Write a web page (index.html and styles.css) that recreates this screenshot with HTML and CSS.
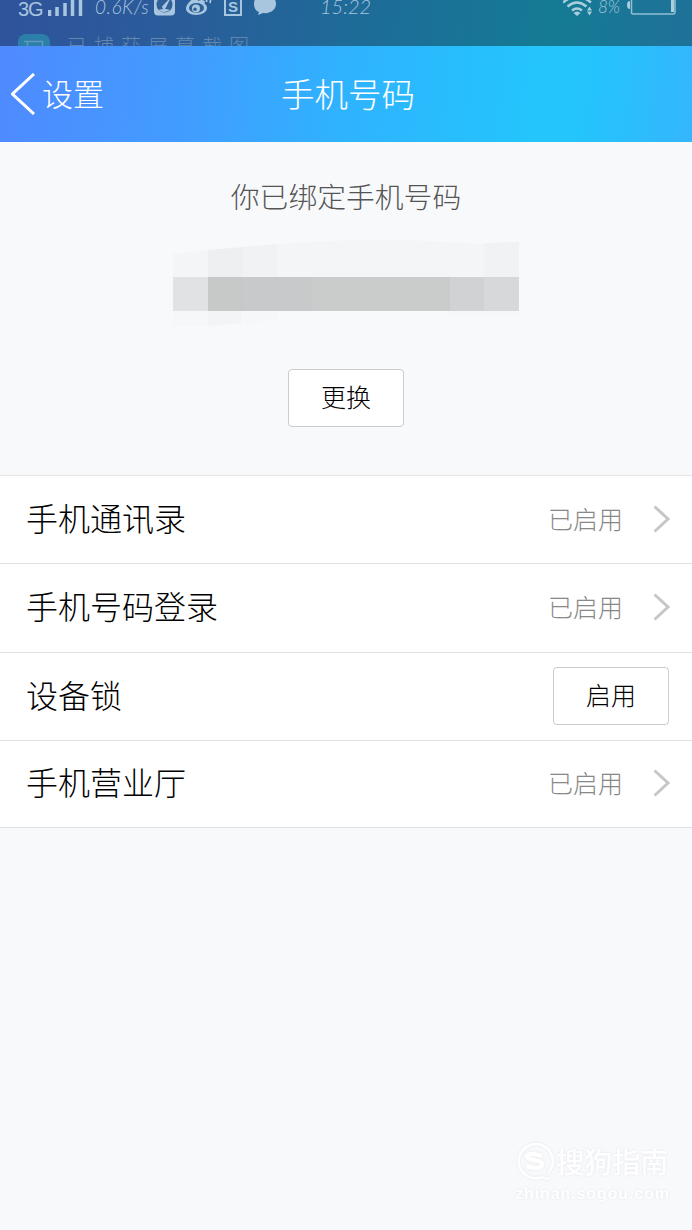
FILE: index.html
```html
<!DOCTYPE html>
<html lang="zh-CN">
<head>
  <meta charset="UTF-8">
  <title>手机号码</title>
  <link rel="stylesheet" href="styles.css">
</head>
<body>
<div class="status">
  <div class="status_bar">
    <span class="net">3G</span>
    <svg class="signal" width="35" height="18" viewBox="0 0 35 18">
      <path d="M1.500 18v-6M9 18v-9M17 18V5M24.500 18V2M32.500 18V0" stroke="#a9c6df" stroke-width="3.500"/>
    </svg>
    <span class="speed">0.6K/s</span>
    <svg class="ico_clock" width="21" height="20" viewBox="0 0 21 20">
      <rect y="-4" width="21" height="23.500" rx="4" fill="#a9c6df"/>
      <circle cx="10.500" cy="8.500" r="8" fill="#315f98"/>
      <path d="M4 14q6 4 12 0-5-2-12 0z" fill="#a9c6df"/>
      <path d="M8 10.500L17 1l-5.500 11.500q-3 2-3.500-2z" fill="#a9c6df"/>
    </svg>
    <svg class="ico_weibo" width="28" height="20" viewBox="0 0 28 20">
      <path d="M21 12c0 4-5 7-11 7S0 16 0 12.500C0 9 5 3 9 2.500c3 0 3 1 3 2.500 4-2 8-1 6.500 3 1.500.5 2.500 2 2.500 4z" fill="#a9c6df"/>
      <ellipse cx="10.500" cy="12" rx="7.500" ry="5" fill="#2c6199"/>
      <circle cx="10" cy="12.500" r="4" fill="#a9c6df"/>
      <circle cx="9" cy="13.200" r="1.700" fill="#2c6199"/>
      <path d="M18 2q3 0 2.500 4M20-2q6 3 4 9" fill="none" stroke="#a9c6df" stroke-width="1.800"/>
    </svg>
    <span class="ico_s">S</span>
    <svg class="ico_chat" width="22" height="20" viewBox="0 0 22 20">
      <path d="M11-3C4-3 0 2 0 8c0 4 2 7 5 8l-1 3 5-2c8 1 13-4 13-9S18-3 11-3z" fill="#a9c6df"/>
    </svg>
    <span class="time">15:22</span>
    <svg class="wifi" width="30" height="17" viewBox="0 0 30 17">
      <path d="M0 2.500Q14-9 28 2.500M4.500 6.500q9.500-8 19 0M9 10.500q5-4 10 0" fill="none" stroke="#a9cfdd" stroke-width="2.400"/>
      <path d="M10.500 13q3.500-3 7 0L14 16zM24 10.500l2.500-4 2.500 4zM24 11.500h5l-2.500 4z" fill="#a9cfdd"/>
    </svg>
    <span class="percent">8%</span>
    <svg class="battery" width="50" height="20" viewBox="0 0 50 20">
      <path d="M4.500-5v21.500q0 1.500 2 1.500h39.500q2 0 2-2V-5" fill="none" stroke="#8fc0d4" stroke-width="1.500"/>
      <path d="M3 5Q0 5 0 9t3 4z" fill="#a9cfdd"/>
      <path d="M45.500 0v16" stroke="#a9cfdd" stroke-width="3"/>
    </svg>
  </div>
  <div class="notice">
    <svg class="notice_ico" width="32" height="32" viewBox="0 0 32 32">
      <rect width="32" height="32" rx="8" fill="#2b7fa8"/>
      <path d="M6 7.500h18.500V24M9.500 7v15h14" fill="none" stroke="#6199be" stroke-width="1.500"/>
    </svg>
    <span class="notice_text">已捕获屏幕截图</span>
  </div>
</div>
<div class="header">
  <div class="back">
    <svg width="24" height="42" viewBox="0 0 24 42">
      <path d="M23 1L1.500 21 23 41" fill="none" stroke="#fff" stroke-width="3"/>
    </svg>
    <span>设置</span>
  </div>
  <div class="title">手机号码</div>
</div>
<div class="bind">
  <p class="tip">你已绑定手机号码</p>
  <!-- 号码打码 -->
  <svg class="mosaic" width="346" height="88" viewBox="0 0 346 88">
    <path d="M0 14l35-4v27H0z" fill="#f4f5f7"/>
    <path d="M35 10l35-3v30H35z" fill="#eeeff0"/>
    <path d="M70 7l34-3v33H70z" fill="#f1f2f3"/>
    <path d="M104 4Q200-3 276 2l35 2v33H104z" fill="#f4f5f7"/>
    <path d="M311 3l35-1v35h-35z" fill="#f1f2f4"/>
    <path d="M0 37h35v34H0z" fill="#e1e2e4"/>
    <path d="M35 37h35v34H35z" fill="#c7c9c8"/>
    <path d="M70 37h69v34H70z" fill="#c8c9cb"/>
    <path d="M139 37h138v34H139z" fill="#cacccb"/>
    <path d="M277 37h34v34h-34z" fill="#d1d2d4"/>
    <path d="M311 37h35v34h-35z" fill="#d7d8da"/>
    <path d="M0 71h35v15H0z" fill="#f6f7f9"/>
    <path d="M35 71h34v12l-34 3z" fill="#f3f4f5"/>
    <path d="M70 71h34v9l-34 3zM277 71h69v5h-69z" fill="#f6f7f9"/>
  </svg>
  <div class="btn">更换</div>
</div>
<div class="list">
  <div class="row">
    <span class="name">手机通讯录</span>
    <span class="state">已启用</span>
    <svg class="arrow" width="17" height="28" viewBox="0 0 17 28"><path d="M1.500 1.500L15 14 1.500 26.500"/></svg>
  </div>
  <div class="row">
    <span class="name">手机号码登录</span>
    <span class="state">已启用</span>
    <svg class="arrow" width="17" height="28" viewBox="0 0 17 28"><path d="M1.500 1.500L15 14 1.500 26.500"/></svg>
  </div>
  <div class="row">
    <span class="name">设备锁</span>
    <div class="btn">启用</div>
  </div>
  <div class="row">
    <span class="name">手机营业厅</span>
    <span class="state">已启用</span>
    <svg class="arrow" width="17" height="28" viewBox="0 0 17 28"><path d="M1.500 1.500L15 14 1.500 26.500"/></svg>
  </div>
</div>
<div class="watermark">
  <div class="brand">
    <svg width="40" height="40" viewBox="0 0 40 40">
      <path d="M33 31a17 17 0 1 0-6 4M27 35q4 3 8 1" fill="none" stroke="#fff" stroke-width="2.500"/>
      <path d="M27 14q-14-4-15 0c0 5 15 3 15 8 0 6-10 4-16 2" fill="none" stroke="#fff" stroke-width="4.500"/>
    </svg>
    <span>搜狗指南</span>
  </div>
  <div class="site">zhinan.sogou.com</div>
</div>
</body>
</html>
```
FILE: styles.css
```css
* {
  margin: 0;
  padding: 0;
  box-sizing: border-box;
}
body {
  display: flex;
  flex-direction: column;
  height: 1230px;
  background: #f8f9fb;
  font-family: "Noto Sans CJK SC", sans-serif;
  font-weight: 300;
  overflow: hidden;
}
svg {
  display: block;
  flex: none;
}
.status {
  height: 46px;
  flex: none;
  overflow: hidden;
  background: linear-gradient(96deg, #30539b 0%, #2a5c9a 25%, #1b6f98 58%, #157b94 80%, #1f7199 100%);
  color: #a9c6df;
}
.status_bar {
  display: flex;
  height: 20px;
  margin-bottom: 14px;
  white-space: nowrap;
}
.net {
  width: 30px;
  margin-left: 18px;
  font: 20px/18px "Liberation Sans", sans-serif;
  letter-spacing: -1px;
}
.signal {
  margin-top: -2px;
}
.speed {
  width: 59px;
  margin-left: 12px;
  font: italic 300 19px/13px Lato, sans-serif;
  letter-spacing: 0.5px;
}
.ico_clock {
  margin: -4px 10px 0 0;
}
.ico_weibo {
  margin: -4px 10px 0 1px;
}
.ico_s {
  width: 18px;
  height: 20px;
  margin-top: -4px;
  border: 2px solid #a9c6df;
  font: bold 15px/18px "Liberation Sans", sans-serif;
  text-align: center;
}
.ico_chat {
  margin: -4px 0 0 12px;
}
.time {
  width: 52px;
  margin-left: 44px;
  font: italic 300 20px/13px Lato, sans-serif;
}
.wifi {
  margin-left: 191px;
}
.percent {
  margin-left: 5px;
  width: 29px;
  font: italic 300 17px/13px Lato, sans-serif;
}
.battery {
  margin-top: -4px;
}
.notice {
  display: flex;
  height: 32px;
  color: #6487b0;
}
.notice_ico {
  margin-left: 18px;
}
.notice_text {
  margin: -1px 0 0 17px;
  font-size: 20px;
  line-height: 26px;
  letter-spacing: 7px;
}
.header {
  display: grid;
  grid-template-columns: 1fr auto 1fr;
  align-items: center;
  height: 96px;
  flex: none;
  background: linear-gradient(96deg, #4f8aff 0%, #419dff 28%, #2fb3fe 50%, #24c4fd 76%, #24c4fd 84%, #34b6fd 100%);
  color: #fff;
}
.back {
  display: flex;
  align-items: center;
  gap: 7px;
  padding-left: 11px;
  font-size: 31px;
  line-height: 40px;
}
.back span {
  padding-bottom: 2px;
}
.title {
  margin-left: 4px;
  padding-bottom: 3px;
  font-size: 33.500px;
  line-height: 40px;
}
.bind {
  display: flex;
  flex-direction: column;
  align-items: center;
  height: 333px;
  flex: none;
  padding-top: 34px;
}
.tip {
  font-size: 28.800px;
  line-height: 40px;
  color: #555;
}
.mosaic {
  margin: 24px 0 41px;
}
.btn {
  width: 116px;
  height: 58px;
  border: 1px solid #ccc;
  border-radius: 4px;
  background: #fff;
  font-size: 25px;
  line-height: 52px;
  text-align: center;
  color: #000;
}
.list {
  flex: none;
  border-top: 1px solid #e3e4e6;
  background: #fff;
}
.row {
  display: flex;
  align-items: center;
  height: 88.250px;
  padding: 0 23px 0 26px;
  border-bottom: 1px solid #e0e1e3;
}
.row:last-child {
  height: 87.250px;
}
.name {
  flex: 1;
  padding-bottom: 5px;
  font-size: 32px;
  color: #000;
}
.state {
  margin-right: 30px;
  padding-bottom: 4px;
  font-size: 25px;
  color: #888;
}
.arrow {
  margin: 0 -1px 2px 0;
}
.arrow path {
  fill: none;
  stroke: #c7c7c7;
  stroke-width: 3;
}
.watermark {
  margin: auto 22px 24px auto;
  color: #fff;
}
.watermark svg,
.watermark span,
.site {
  filter: drop-shadow(0 0 1px #e2e5e9);
}
.brand {
  display: flex;
  align-items: center;
  gap: 1px;
  padding-left: 3px;
  font-size: 28px;
  line-height: 40px;
  font-weight: 500;
}
.brand span {
  margin-top: -2px;
}
.site {
  padding-left: 3px;
  font: bold 16px/24px "Liberation Sans", sans-serif;
  letter-spacing: 0.900px;
}
```
